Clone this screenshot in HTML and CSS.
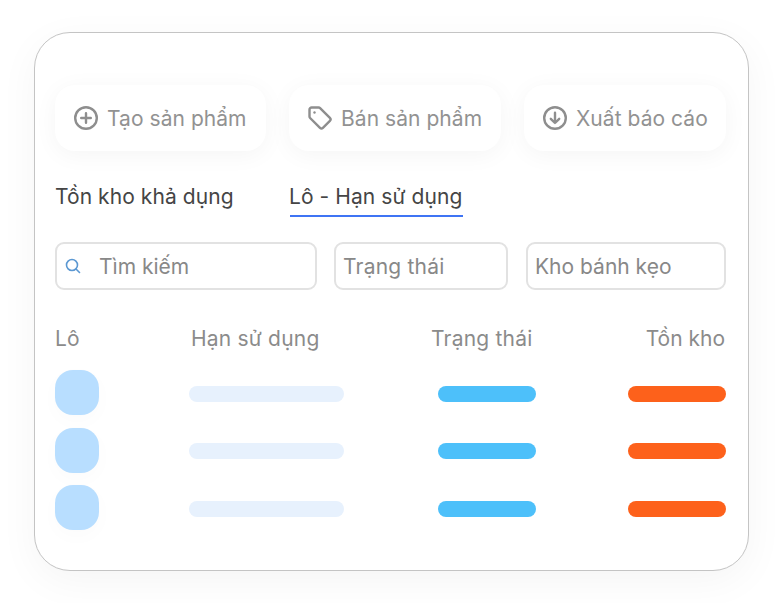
FILE: index.html
```html
<!DOCTYPE html>
<html lang="vi">
<head>
<meta charset="utf-8">
<title>Lô - Hạn sử dụng</title>
<link rel="stylesheet" href="styles.css">
</head>
<body>
<main class="card">
  <div class="actions">
    <div class="action action-create">
      <svg class="action-icon" viewBox="0 0 26 26"><circle cx="13" cy="13" r="10.8"/><path d="M13 8.2v9.6M8.2 13h9.6"/></svg>
      <span>Tạo sản phẩm</span>
    </div>
    <div class="action action-sell">
      <svg class="action-icon" viewBox="0 0 26 26"><path d="M2.5 4.6c0-1.2 1-2.1 2.1-2.1h7c.6 0 1.100.2 1.500.6l9.800 9.800c.8.8.8 2.100 0 2.900l-7 7c-.8.8-2.100.8-2.900 0L3.100 13c-.4-.4-.6-.9-.6-1.500z"/><circle class="dot" cx="7.500" cy="7.500" r="1.200"/></svg>
      <span>Bán sản phẩm</span>
    </div>
    <div class="action action-export">
      <svg class="action-icon" viewBox="0 0 26 26"><circle cx="13" cy="13" r="10.800"/><path d="M13 7.800v10M8.800 13.800l4.200 4.200 4.200-4.200"/></svg>
      <span>Xuất báo cáo</span>
    </div>
  </div>

  <div class="tabs">
    <div class="tab tab-stock">Tồn kho khả dụng</div>
    <div class="tab tab-active">Lô - Hạn sử dụng</div>
  </div>

  <div class="filters">
    <div class="field field-search">
      <svg class="search-icon" viewBox="0 0 16 16"><circle cx="7" cy="7" r="5.500"/><path d="M11 11l3.500 3.500"/></svg>
      <span class="search-label">Tìm kiếm</span>
    </div>
    <div class="field field-status">Trạng thái</div>
    <div class="field field-store">Kho bánh kẹo</div>
  </div>

  <div class="table">
    <div class="head head-lot">Lô</div>
    <div class="head head-date">Hạn sử dụng</div>
    <div class="head head-state">Trạng thái</div>
    <div class="head head-stock">Tồn kho</div>

    <div class="thumb"></div><div class="bar bar-date"></div><div class="bar bar-status"></div><div class="bar bar-stock"></div>
    <div class="thumb"></div><div class="bar bar-date"></div><div class="bar bar-status"></div><div class="bar bar-stock"></div>
    <div class="thumb"></div><div class="bar bar-date"></div><div class="bar bar-status"></div><div class="bar bar-stock"></div>
  </div>
</main>
</body>
</html>
```
FILE: styles.css
```css
* { box-sizing: border-box; }

html, body {
  margin: 0;
  height: 603px;
  overflow: hidden;
  background: #fff;
}

body {
  padding: 32px 31px 32px 34px;
  font-family: Inter, "Noto Sans", sans-serif;
}

.card {
  width: 715px;
  height: 539px;
  padding: 52px 22px 0 20px;
  background: #fff;
  border: 1px solid #c4c4c4;
  border-radius: 36px;
  box-shadow: 0 10px 40px rgba(0, 0, 0, 0.045);
}

.actions {
  display: flex;
  gap: 23px;
}

.action {
  display: flex;
  align-items: center;
  height: 66px;
  padding-left: 18px;
  gap: 8px;
  border-radius: 20px;
  background: #fff;
  box-shadow: 0 4px 24px rgba(0, 0, 0, 0.045);
  color: #929292;
  font-size: 21px;
  letter-spacing: 0.05px;
  white-space: nowrap;
}

.action-create { width: 211px; }
.action-sell { width: 212px; }
.action-export { width: 202px; }

.action-icon {
  width: 26px;
  height: 26px;
  flex: none;
  fill: none;
  stroke: #8e8e8e;
  stroke-width: 2.400;
  stroke-linecap: round;
  stroke-linejoin: round;
}

.action-icon .dot {
  fill: #8e8e8e;
  stroke: none;
}

.tabs {
  display: flex;
  margin-top: 28px;
  font-size: 21px;
  letter-spacing: 0.07px;
  color: #454545;
}

.tab {
  height: 38px;
  padding-top: 5px;
  white-space: nowrap;
}

.tab-stock {
  width: 235px;
}

.tab-active {
  width: 173px;
  text-indent: -1px;
  border-bottom: 2px solid #3f74f4;
}

.filters {
  display: flex;
  margin-top: 25px;
  font-size: 21px;
  color: #888;
}

.field {
  display: flex;
  align-items: center;
  height: 48px;
  border: 2px solid #e2e2e2;
  border-radius: 9px;
  white-space: nowrap;
}

.field-search {
  width: 262px;
  padding-left: 8px;
}

.field-status {
  width: 174px;
  margin-left: 17px;
  padding-left: 7px;
  letter-spacing: 0.2px;
}

.field-store {
  width: 200px;
  margin-left: 18px;
  padding-left: 7px;
}

.search-icon {
  width: 16px;
  height: 16px;
  fill: none;
  stroke: #5b98d2;
  stroke-width: 1.600;
  stroke-linecap: round;
}

.search-label {
  margin-left: 18px;
}

.table {
  display: grid;
  grid-template-columns: 135px 242px 196px 98px;
  grid-template-rows: 37px repeat(3, 45px);
  row-gap: 12.500px;
  align-items: center;
  margin-top: 30.500px;
}

.head {
  margin-bottom: 2px;
  font-size: 21px;
  color: #8b8b8b;
  letter-spacing: 0.2px;
  white-space: nowrap;
}

.head-date { padding-left: 1px; }

.head-state { margin-left: -1px; }

.head-stock {
  justify-self: end;
  padding-right: 1px;
  letter-spacing: 0;
}

.thumb {
  width: 44px;
  height: 45px;
  border-radius: 18px;
  background: #b8deff;
  box-shadow: 0 6px 20px rgba(0, 0, 0, 0.02);
}

.bar {
  height: 16px;
  margin-top: 2px;
  border-radius: 8px;
}

.bar-date {
  width: 155px;
  margin-left: -1px;
  background: #e7f1fd;
}

.bar-status {
  width: 98px;
  margin-left: 6px;
  background: #4dc0fa;
}

.bar-stock {
  width: 98px;
  background: #fd611b;
}
```
